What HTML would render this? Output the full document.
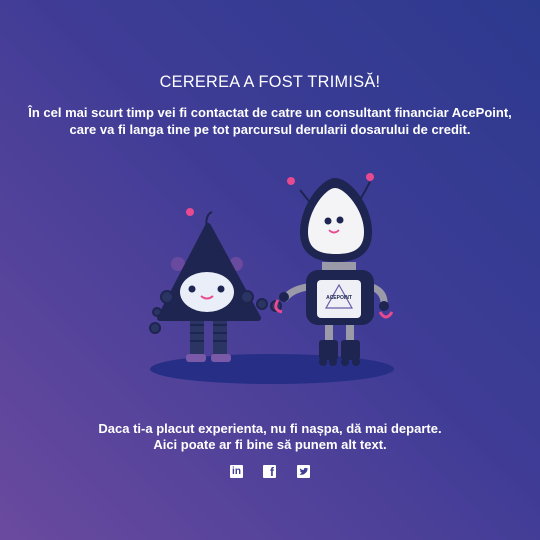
<!DOCTYPE html>
<html><head><style>
html,body{margin:0;padding:0}
body{width:540px;height:540px;overflow:hidden;background:linear-gradient(225deg,#2c3a8e 0%,#3f3c96 45%,#6a4a9f 100%);font-family:"Liberation Sans",sans-serif;color:#fff;position:relative}
.t{position:absolute;left:0;width:540px;text-align:center}
</style></head><body>
<div class="t" style="top:73px;font-size:16.3px;letter-spacing:0.3px">CEREREA A FOST TRIMISĂ!</div>
<div class="t" style="top:104px;font-size:13px;font-weight:bold;line-height:17px">În cel mai scurt timp vei fi contactat de catre un consultant financiar AcePoint,<br>care va fi langa tine pe tot parcursul derularii dosarului de credit.</div>
<svg style="position:absolute;left:0;top:0" width="540" height="540">
<ellipse cx="272" cy="369" rx="122" ry="15" fill="#262f85"/>
<path d="M208 232 C205 224 206 214 212 212" stroke="#1e2550" stroke-width="2" fill="none"/>
<circle cx="190" cy="212" r="4" fill="#e8498f"/>
<circle cx="178" cy="264" r="7" fill="#6a4a9f"/><circle cx="236" cy="264" r="7" fill="#6a4a9f"/>
<rect x="190" y="316" width="14" height="40" fill="#2a3563"/><rect x="213" y="316" width="14" height="40" fill="#2a3563"/>
<g stroke="#1e2550" stroke-width="2"><line x1="190" y1="325" x2="204" y2="325"/><line x1="190" y1="333" x2="204" y2="333"/><line x1="190" y1="341" x2="204" y2="341"/><line x1="213" y1="325" x2="227" y2="325"/><line x1="213" y1="333" x2="227" y2="333"/><line x1="213" y1="341" x2="227" y2="341"/></g>
<rect x="186" y="354" width="20" height="8" rx="3" fill="#7a5aa8"/><rect x="211" y="354" width="20" height="8" rx="3" fill="#7a5aa8"/>
<path d="M208 226 L258 318 L160 318 Z" fill="#1e2550" stroke="#1e2550" stroke-width="6" stroke-linejoin="round"/>
<ellipse cx="207" cy="292" rx="27" ry="20" fill="#e9eef8"/>
<circle cx="192" cy="289" r="3.5" fill="#1e2550"/><circle cx="221" cy="289" r="3.5" fill="#1e2550"/>
<path d="M201 296 Q207 301 213 296" stroke="#e8498f" stroke-width="2" fill="none"/>
<g fill="#2a3563" stroke="#1e2550" stroke-width="2"><circle cx="167" cy="297" r="6"/><circle cx="157" cy="312" r="4"/><circle cx="155" cy="328" r="5"/><circle cx="247" cy="297" r="6"/><circle cx="262" cy="304" r="5"/><circle cx="276" cy="306" r="5"/></g>
<line x1="300" y1="190" x2="312" y2="205" stroke="#1e2550" stroke-width="2"/><circle cx="291" cy="181" r="4" fill="#e8498f"/>
<line x1="370" y1="182" x2="360" y2="200" stroke="#1e2550" stroke-width="2"/><circle cx="370" cy="177" r="4" fill="#e8498f"/>
<path d="M307 287 Q290 290 284 300" stroke="#9a9aa8" stroke-width="7" fill="none"/>
<path d="M372 287 Q385 292 384 305" stroke="#9a9aa8" stroke-width="7" fill="none"/>
<circle cx="284" cy="297" r="5" fill="#1e2550"/><circle cx="384" cy="306" r="5" fill="#1e2550"/>
<path d="M278 300 Q272 310 282 312" stroke="#e8498f" stroke-width="3" fill="none"/>
<path d="M380 312 Q386 322 392 312" stroke="#e8498f" stroke-width="3" fill="none"/>
<rect x="325" y="322" width="8" height="22" fill="#9a9aa8"/><rect x="346" y="322" width="8" height="22" fill="#9a9aa8"/>
<rect x="319" y="340" width="19" height="20" rx="3" fill="#1e2550"/><rect x="341" y="340" width="19" height="20" rx="3" fill="#1e2550"/>
<g fill="#1e2550"><circle cx="323" cy="362" r="4"/><circle cx="333" cy="362" r="4"/><circle cx="345" cy="362" r="4"/><circle cx="356" cy="362" r="4"/></g>
<rect x="322" y="262" width="34" height="10" fill="#9a9aa8"/>
<rect x="306" y="270" width="68" height="55" rx="12" fill="#1e2550"/>
<rect x="317" y="280" width="44" height="38" rx="4" fill="#eef0f6"/>
<path d="M339 285 L352 308 L326 308 Z" fill="none" stroke="#6a5aa8" stroke-width="1.2"/>
<text x="339" y="299" font-size="5" font-weight="bold" fill="#1e2550" text-anchor="middle" font-family="Liberation Sans">ACEPOINT</text>
<path d="M335 178 C322 178 300 205 300 232 C300 255 316 262 336 262 C356 262 372 255 372 232 C372 205 350 178 335 178 Z" fill="#1e2550"/>
<path d="M335 188 C326 188 308 210 308 232 C308 250 320 254 336 254 C352 254 364 250 364 232 C364 210 345 188 335 188 Z" fill="#f4f4f6"/>
<circle cx="328" cy="221" r="3.5" fill="#1e2550"/><circle cx="340" cy="220" r="3.5" fill="#1e2550"/>
<path d="M329 230 Q334 235 339 230" stroke="#e8498f" stroke-width="1.8" fill="none"/>
</svg>
<div class="t" style="top:421px;font-size:13px;font-weight:bold;line-height:16px">Daca ti-a placut experienta, nu fi nașpa, dă mai departe.<br>Aici poate ar fi bine să punem alt text.</div>
<div style="position:absolute;top:465px;left:230px;width:13px;height:13px;background:#fff;border-radius:1px;color:#3f3c96;font:bold 10px 'Liberation Sans';text-align:center;line-height:14px">in</div>
<div style="position:absolute;top:465px;left:263px;width:13px;height:13px;background:#fff;border-radius:1px;color:#3f3c96;font:bold 12px 'Liberation Sans';text-align:right;line-height:15px;box-sizing:border-box;padding-right:2px;overflow:hidden">f</div>
<svg style="position:absolute;top:465px;left:297px" width="13" height="13"><rect width="13" height="13" rx="1" fill="#fff"/><path d="M2.5 9.5 Q6 10.5 8.5 8 Q10.5 6 10.5 4.2 L11.5 3.2 L10 3.5 Q9 2.5 7.8 3 Q6.5 3.6 6.8 5.2 Q4.5 5 3 3.4 Q2.5 5 4 6 L3 5.9 Q3.4 7.4 4.8 7.6 Q3.9 8.6 2.5 9.5Z" fill="#3f3c96"/></svg>
</body></html>
